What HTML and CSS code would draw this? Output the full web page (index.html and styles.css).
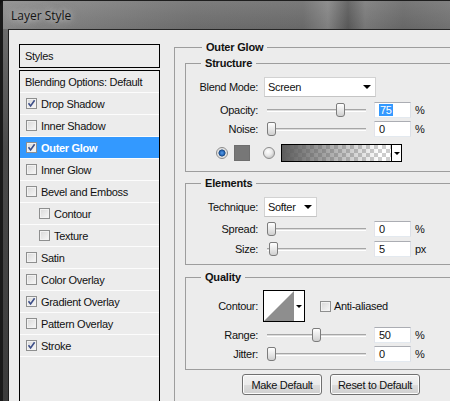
FILE: index.html
```html
<!DOCTYPE html>
<html lang="en">
<head>
  <meta charset="UTF-8">
  <title>Layer Style</title>
  <link rel="stylesheet" href="styles.css">
</head>
<body>

<div class="window">
  <div class="titlebar"><span class="title">Layer Style</span></div>
  <div class="frame">
    <div class="client">

      <!-- effect list -->
      <div class="sidebar">
        <div class="styles-head">Styles</div>
        <ul class="effects">
          <li class="plain">Blending Options: Default</li>
          <li><span class="check"><svg viewBox="0 0 9 9"><path d="M1.5 4.2 L3.6 7 L7.6 1.3"/></svg></span>Drop Shadow</li>
          <li><span class="check"></span>Inner Shadow</li>
          <li class="active"><span class="check"><svg viewBox="0 0 9 9"><path d="M1.5 4.2 L3.6 7 L7.6 1.3"/></svg></span>Outer Glow</li>
          <li><span class="check"></span>Inner Glow</li>
          <li><span class="check"></span>Bevel and Emboss</li>
          <li class="sub"><span class="check"></span>Contour</li>
          <li class="sub"><span class="check"></span>Texture</li>
          <li><span class="check"></span>Satin</li>
          <li><span class="check"></span>Color Overlay</li>
          <li><span class="check"><svg viewBox="0 0 9 9"><path d="M1.5 4.2 L3.6 7 L7.6 1.3"/></svg></span>Gradient Overlay</li>
          <li><span class="check"></span>Pattern Overlay</li>
          <li><span class="check"><svg viewBox="0 0 9 9"><path d="M1.5 4.2 L3.6 7 L7.6 1.3"/></svg></span>Stroke</li>
        </ul>
      </div>

      <!-- settings -->
      <div class="panel">
        <div class="group outer">
          <div class="group-title">Outer Glow</div>

          <div class="group structure">
            <div class="group-title">Structure</div>
            <div class="row tall">
              <span class="lbl">Blend Mode:</span>
              <div class="select blend">Screen<span class="arrow"></span></div>
            </div>
            <div class="row opacity-row">
              <span class="lbl">Opacity:</span>
              <div class="slider"><span class="thumb" style="left: 69px"></span></div>
              <div class="field"><span class="sel">75</span></div>
              <span class="unit">%</span>
            </div>
            <div class="row">
              <span class="lbl">Noise:</span>
              <div class="slider"><span class="thumb" style="left: 0px"></span></div>
              <div class="field">0</div>
              <span class="unit">%</span>
            </div>
            <div class="row color-row">
              <span class="radio on"></span>
              <span class="swatch"></span>
              <span class="radio off"></span>
              <div class="gradient"><span class="grad-fill"></span><span class="drop"><span class="arrow small"></span></span></div>
            </div>
          </div>

          <div class="group elements">
            <div class="group-title">Elements</div>
            <div class="row tall">
              <span class="lbl">Technique:</span>
              <div class="select technique">Softer<span class="arrow"></span></div>
            </div>
            <div class="row spread-row">
              <span class="lbl">Spread:</span>
              <div class="slider"><span class="thumb" style="left: 0px"></span></div>
              <div class="field">0</div>
              <span class="unit">%</span>
            </div>
            <div class="row">
              <span class="lbl">Size:</span>
              <div class="slider"><span class="thumb" style="left: 2px"></span></div>
              <div class="field">5</div>
              <span class="unit">px</span>
            </div>
          </div>

          <div class="group quality">
            <div class="group-title">Quality</div>
            <div class="row contour-row">
              <span class="lbl">Contour:</span>
              <div class="contour">
                <svg class="curve" viewBox="0 0 30 30" width="30" height="30"><rect width="30" height="30" fill="#fff"/><polygon points="0,30 30,0 30,30" fill="#8e8e8e"/></svg>
                <span class="drop"><span class="arrow small"></span></span>
              </div>
              <span class="check plain-check"></span>
              <span class="check-label">Anti-aliased</span>
            </div>
            <div class="row range-row">
              <span class="lbl">Range:</span>
              <div class="slider"><span class="thumb" style="left: 45px"></span></div>
              <div class="field">50</div>
              <span class="unit">%</span>
            </div>
            <div class="row">
              <span class="lbl">Jitter:</span>
              <div class="slider"><span class="thumb" style="left: 0px"></span></div>
              <div class="field">0</div>
              <span class="unit">%</span>
            </div>
          </div>

          <div class="buttons">
            <button class="btn make">Make Default</button>
            <button class="btn reset">Reset to Default</button>
          </div>
        </div>
      </div>

    </div>
  </div>
</div>

</body>
</html>
```

FILE: styles.css
```css
/* General */
html, body {
  margin: 0;
  padding: 0;
}
body {
  width: 450px;
  height: 401px;
  overflow: hidden;
  background: #111;
  font-family: "Liberation Sans", Arial, sans-serif;
  font-size: 11px;
  letter-spacing: -0.3px;
  color: #111;
}
* {
  box-sizing: border-box;
}

/* Window chrome */
.window {
  width: 450px;
  height: 401px;
  display: flex;
  flex-direction: column;
  background: #1a1a1a;
  border-top-left-radius: 6px;
  overflow: hidden;
}
.titlebar {
  height: 29px;
  flex: none;
  margin-left: 3px;
  border-top: 1px solid #1e1e1e;
  padding-left: 8px;
  display: flex;
  align-items: center;
  background:
    linear-gradient(180deg, rgba(255,255,255,0.08), rgba(0,0,0,0.05)),
    linear-gradient(90deg, #8e8e8e 0, #828282 70px, #727272 190px, #6e6e6e 300px, #868686 325px, #5c5c5c 345px, #7c7c7c 362px, #6c6c6c 400px, #777 450px);
}
.title {
  font-family: "Open Sans", "Liberation Sans", sans-serif;
  font-size: 12px;
  letter-spacing: 0;
  color: #141414;
  text-shadow: 0 0 6px rgba(225,225,225,0.8), 0 0 12px rgba(210,210,210,0.7);
}
.frame {
  flex: 1;
  display: flex;
  margin-left: 3px;
  padding-left: 5px;
  background: linear-gradient(180deg, #6c6c6c 0, #4a4a4a 120px, #3a3a3a 400px);
}
.client {
  flex: 1;
  display: flex;
  border-top: 1px solid #262626;
  border-left: 1px solid #1c1c1c;
  background: #ececec;
  padding: 14px 0 0 10px;
}

/* Effect list */
.sidebar {
  width: 141px;
  flex: none;
  display: flex;
  flex-direction: column;
}
.styles-head {
  height: 24px;
  border: 1px solid #000;
  padding-left: 5px;
  line-height: 22px;
}
.effects {
  flex: 1;
  list-style: none;
  margin: 2px 0 0;
  padding: 0;
  border: 1px solid #000;
  border-bottom: none;
}
.effects li {
  height: 22px;
  border-bottom: 1px solid #fcfcfc;
  display: flex;
  align-items: center;
  padding-left: 6px;
}
.effects li.plain {
  padding-left: 5px;
}
.effects li.sub {
  padding-left: 19px;
}
.effects li.active {
  background: #3399ff;
  color: #fff;
  font-weight: bold;
}

/* Checkboxes */
.check {
  width: 11px;
  height: 11px;
  flex: none;
  margin-right: 4px;
  border: 1px solid #8e8f8f;
  background: linear-gradient(135deg, #d8d8d8, #f8f8f8);
  box-shadow: inset 0 0 0 1px #f2f2f2;
}
.check svg {
  display: block;
  width: 9px;
  height: 9px;
}
.check path {
  fill: none;
  stroke: #3c4e88;
  stroke-width: 1.6;
}

/* Settings panel */
.panel {
  width: 300px;
  flex: none;
  margin-left: 14px;
  padding-top: 3px;
  display: flex;
  flex-direction: column;
}
.group {
  border: 1px solid #9d9d9d;
  border-right: none;
}
.group-title {
  display: block;
  width: max-content;
  margin: -7px 0 0 15px;
  padding: 0 4px;
  line-height: 13px;
  background: #ececec;
  font-weight: bold;
  letter-spacing: -0.2px;
}
.outer {
  flex: 1;
  border-bottom: none;
  padding-left: 10px;
}
.outer > .group-title {
  margin-left: 17px;
}
.structure {
  margin-top: 9px;
  padding-bottom: 9px;
}
.elements {
  margin-top: 11px;
  padding-bottom: 6px;
}
.quality {
  margin-top: 12px;
  padding-bottom: 6px;
}

/* Rows */
.row {
  display: flex;
  align-items: center;
  height: 19px;
}
.row.tall {
  height: 20px;
  margin-top: 7px;
}
.opacity-row,
.range-row {
  margin-top: 3px;
}
.spread-row {
  margin-top: 2px;
}
.spread-row + .row {
  margin-top: 1px;
}
.lbl {
  width: 72px;
  flex: none;
  text-align: right;
  margin-right: 6px;
}

/* Popup menus */
.select {
  height: 20px;
  display: flex;
  align-items: center;
  justify-content: space-between;
  padding: 0 4px 0 3px;
  background: #fff;
  border: 1px solid #d2d2d2;
  border-bottom-color: #c4c4c4;
}
.select.blend {
  width: 112px;
}
.select.technique {
  width: 53px;
}
.arrow {
  width: 0;
  height: 0;
  border-left: 4px solid transparent;
  border-right: 4px solid transparent;
  border-top: 4px solid #000;
}
.arrow.small {
  border-left-width: 3px;
  border-right-width: 3px;
  border-top-width: 3px;
}

/* Sliders */
.slider {
  position: relative;
  width: 99px;
  height: 16px;
  margin-left: 3px;
  background: linear-gradient(180deg, transparent 7px, #a6a6a6 7px, #a6a6a6 8px, #dcdcdc 8px, #dcdcdc 9px, #fff 9px, #fff 10px, transparent 10px);
}
.thumb {
  position: absolute;
  top: 1px;
  width: 9px;
  height: 14px;
  border: 1px solid #7c7c7c;
  border-radius: 2px 2px 3px 3px;
  background: linear-gradient(180deg, #fff, #e4e4e4 60%, #cfcfcf);
}

/* Number fields */
.field {
  width: 37px;
  height: 16px;
  margin-left: 8px;
  padding-left: 4px;
  line-height: 14px;
  background: #fff;
  border: 1px solid;
  border-color: #abadb3 #dbdfe6 #e3e9ef #e2e3ea;
}
.field .sel {
  background: #3399ff;
  color: #fff;
  padding: 0 1px;
}
.unit {
  margin-left: 4px;
}

/* Colour choice */
.color-row {
  height: 18px;
  margin-top: 6px;
}
.radio {
  width: 12px;
  height: 12px;
  flex: none;
  border-radius: 50%;
  border: 1px solid #8b8b8b;
}
.radio.on {
  margin-left: 30px;
  background: radial-gradient(circle, #5aa0e8 0, #2a6cc0 2px, #17467e 3.2px, #dcdcdc 3.8px, #f6f6f6 6px);
}
.radio.off {
  margin-left: 13px;
  background: radial-gradient(circle at 40% 35%, #fff 0, #e8e8e8 4px, #cfcfcf 6px);
}
.swatch {
  width: 16px;
  height: 16px;
  flex: none;
  margin-left: 6px;
  background: #777;
  border: 1px solid #6e6e6e;
}
.gradient {
  width: 121px;
  height: 18px;
  margin-left: 6px;
  display: flex;
  border: 1px solid #000;
  background: repeating-conic-gradient(#cdcdcd 0 25%, #fff 0 50%) 0 0 / 8px 8px;
}
.grad-fill {
  flex: 1;
  background: linear-gradient(90deg, #5c5c5c, rgba(92,92,92,0) 90%);
}
.drop {
  width: 10px;
  flex: none;
  display: flex;
  align-items: center;
  justify-content: center;
  background: #fff;
  border-left: 1px solid #000;
}

/* Contour */
.contour-row {
  height: 32px;
  margin-top: 6px;
}
.contour {
  width: 42px;
  height: 32px;
  margin-left: -1px;
  display: flex;
  border: 1px solid #000;
  background: #fff;
}
.curve {
  display: block;
}
.contour .drop {
  border-left: none;
}
.plain-check {
  margin-left: 15px;
  margin-right: 3px;
}

/* Buttons */
.buttons {
  display: flex;
  gap: 8px;
  margin: 4px 0 0 57px;
}
.btn {
  height: 21px;
  padding: 0;
  font-family: inherit;
  font-size: 11px;
  letter-spacing: -0.3px;
  color: #111;
  border: 1px solid #707070;
  border-radius: 3px;
  background: linear-gradient(180deg, #f2f2f2 0, #ebebeb 50%, #dddddd 50%, #cfcfcf 100%);
  box-shadow: inset 0 0 0 1px #fcfcfc;
}
.btn.make {
  width: 80px;
}
.btn.reset {
  width: 90px;
}
```
